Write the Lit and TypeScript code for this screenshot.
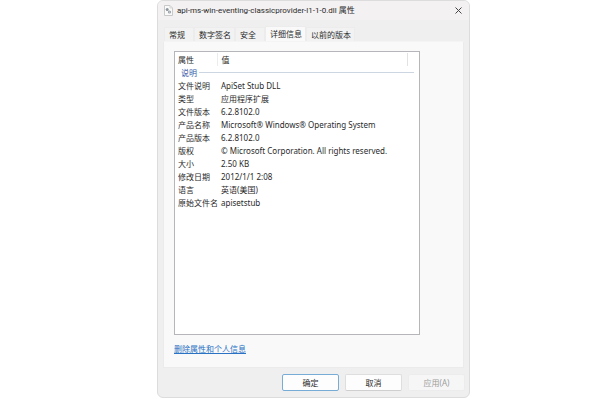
import { LitElement, html, css } from "lit";
import { customElement, state } from "lit/decorators.js";

@customElement("app-root")
export class AppRoot extends LitElement {
  @state() private tab = "详细信息";

  private tabs = ["常规", "数字签名", "安全", "详细信息", "以前的版本"];

  private rows: [string, string][] = [
    ["文件说明", "ApiSet Stub DLL"],
    ["类型", "应用程序扩展"],
    ["文件版本", "6.2.8102.0"],
    ["产品名称", "Microsoft® Windows® Operating System"],
    ["产品版本", "6.2.8102.0"],
    ["版权", "© Microsoft Corporation. All rights reserved."],
    ["大小", "2.50 KB"],
    ["修改日期", "2012/1/1 2:08"],
    ["语言", "英语(美国)"],
    ["原始文件名", "apisetstub"],
  ];

  static styles = css`
    :host {
      display: flex;
      box-sizing: border-box;
      min-height: 100vh;
      padding: 0 130px 2px 157px;
      background: #fff;
      color: #2a2a2a;
      font: 8px/13px "Noto Sans", "Noto Sans CJK SC", sans-serif;
    }
    * {
      box-sizing: border-box;
    }
    button {
      font: inherit;
      color: inherit;
      margin: 0;
      padding: 0;
    }
    .dialog {
      flex: 1;
      display: flex;
      flex-direction: column;
      border: 1px solid #dcdcdc;
      border-radius: 6px;
      background: #efefef;
      overflow: hidden;
    }
    .title {
      display: flex;
      align-items: center;
      height: 19px;
      padding: 0 6px;
      background: #f4f1f2;
    }
    .title h1 {
      flex: 1;
      margin: 0 0 0 4px;
      font: 8px/13px Roboto, "Noto Sans CJK SC", sans-serif;
      white-space: nowrap;
    }
    .close {
      display: flex;
      border: 0;
      background: none;
    }
    .tabs {
      display: flex;
      align-items: flex-end;
      padding: 6px 6px 0;
    }
    .tab {
      height: 14px;
      padding: 0 3px 0 4px;
      border: 1px solid #ececec;
      border-bottom: 0;
      background: #f2f2f2;
      white-space: nowrap;
      text-align: left;
      line-height: 13px;
    }
    .tab.short {
      width: 30px;
    }
    .tab.active {
      height: 15px;
      padding-bottom: 2px;
      background: #f9f9f9;
    }
    .panel {
      flex: 1;
      display: flex;
      flex-direction: column;
      align-items: flex-start;
      margin: 0 5px;
      padding: 9px 43px 12px 10px;
      border: 1px solid #ebebeb;
      border-top-color: #f4f4f4;
      background: #f9f9f9;
    }
    .list {
      flex: 1;
      align-self: stretch;
      border: 1px solid #b4b6ba;
      background: #fff;
      padding: 1px 5px 0 3px;
    }
    table {
      width: 100%;
      border-collapse: collapse;
      table-layout: fixed;
    }
    th,
    td {
      height: 13px;
      padding: 0;
      text-align: left;
      font-weight: normal;
      white-space: nowrap;
    }
    .name {
      width: 39px;
      border-right: 1px solid #ececec;
    }
    .value {
      padding-left: 4px;
    }
    .end {
      width: 7px;
      border-left: 1px solid #e2e2e2;
    }
    .group {
      display: flex;
      align-items: center;
      gap: 2px;
      padding-left: 3px;
      color: #3357a8;
    }
    .group::after {
      content: "";
      flex: 1;
      height: 1px;
      background: #ccd5e2;
    }
    .remove {
      margin-top: 7px;
      color: #2a72c4;
    }
    .actions {
      display: flex;
      justify-content: flex-end;
      gap: 6px;
      padding: 6px 4px;
    }
    .action {
      width: 57px;
      height: 17px;
      border: 1px solid #dedede;
      border-bottom-color: #cfcfcf;
      border-radius: 2px;
      background: #fdfdfd;
      line-height: 15px;
    }
    .action.primary {
      border-color: #77acd6;
    }
    .action:disabled {
      border-color: #ececec;
      background: #f6f6f6;
      color: #9c9c9c;
    }
  `;

  render() {
    return html`
      <section class="dialog" role="dialog" aria-labelledby="title">
        <header class="title">
          <svg width="9" height="11" viewBox="0 0 9 11" aria-hidden="true">
            <path d="M.5.5h5.500l2.500 2.500v7.500h-8z" fill="#fafafa" stroke="#c9c9c9" />
            <path d="M6 .5v2.500h2.500" fill="none" stroke="#d5d5d5" />
            <circle cx="3.200" cy="4.500" r="1.500" fill="#8c959c" />
            <circle cx="5.500" cy="7" r="1.600" fill="#99a1a7" />
            <circle cx="5.500" cy="7" r=".5" fill="#eee" />
          </svg>
          <h1 id="title">api-ms-win-eventing-classicprovider-l1-1-0.dll 属性</h1>
          <button class="close" aria-label="关闭">
            <svg width="9" height="9" viewBox="0 0 9 9">
              <path d="M1.500 1.500l6 6M7.500 1.500l-6 6" stroke="#444" fill="none" />
            </svg>
          </button>
        </header>
        <nav class="tabs" role="tablist">
          ${this.tabs.map(
            (t) => html`<button
              class="tab ${t.length < 3 ? "short" : ""} ${t === this.tab ? "active" : ""}"
              role="tab"
              aria-selected=${t === this.tab}
              @click=${() => (this.tab = t)}
            >${t}</button>`
          )}
        </nav>
        <div class="panel" role="tabpanel">
          <div class="list">
            <table>
              <thead>
                <tr>
                  <th class="name">属性</th>
                  <th class="value">值</th>
                  <th class="end"></th>
                </tr>
              </thead>
              <tbody>
                <tr>
                  <th colspan="3"><div class="group">说明</div></th>
                </tr>
                ${this.rows.map(
                  ([k, v]) => html`<tr>
                    <th>${k}</th>
                    <td class="value" colspan="2">${v}</td>
                  </tr>`
                )}
              </tbody>
            </table>
          </div>
          <a class="remove" href="#">删除属性和个人信息</a>
        </div>
        <footer class="actions">
          <button class="action primary">确定</button>
          <button class="action">取消</button>
          <button class="action" disabled>应用(A)</button>
        </footer>
      </section>
    `;
  }
}
